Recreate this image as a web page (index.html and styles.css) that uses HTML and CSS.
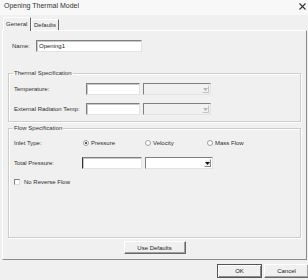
FILE: index.html
```html
<!DOCTYPE html>
<html lang="en">
<head>
  <meta charset="UTF-8">
  <title>Opening Thermal Model</title>
  <link rel="stylesheet" href="styles.css">
</head>
<body>
  <div class="dialog">
    <div class="titlebar">
      <span class="title">Opening Thermal Model</span>
      <svg class="close" width="7" height="7" viewBox="0 0 7 7"><path d="M0.5 0.5L6.5 6.5M6.5 0.5L0.5 6.5" stroke="#333" stroke-width="1.1"/></svg>
    </div>

    <div class="tabs">
      <span class="tab active">General</span>
      <span class="tab">Defaults</span>
    </div>

    <div class="page">
      <div class="row name-row">
        <label class="lbl w-name">Name:</label>
        <input class="field f-name" value="Opening1">
      </div>

      <fieldset class="group thermal">
        <legend>Thermal Specification</legend>
        <div class="row">
          <label class="lbl w-therm">Temperature:</label>
          <input class="field f-therm">
          <div class="combo disabled"><span class="arrow"><svg width="5" height="3" viewBox="0 0 5 3"><path d="M0 0H5L2.5 3Z" fill="#b5b5b5"/></svg></span></div>
        </div>
        <div class="row gap">
          <label class="lbl w-therm">External Radiaton Temp:</label>
          <input class="field f-therm">
          <div class="combo disabled"><span class="arrow"><svg width="5" height="3" viewBox="0 0 5 3"><path d="M0 0H5L2.5 3Z" fill="#b5b5b5"/></svg></span></div>
        </div>
      </fieldset>

      <fieldset class="group flow">
        <legend>Flow Specification</legend>
        <div class="row">
          <label class="lbl w-inlet">Inlet Type:</label>
          <span class="opt"><span class="radio checked"></span>Pressure</span>
          <span class="opt"><span class="radio"></span>Velocity</span>
          <span class="opt"><span class="radio"></span>Mass Flow</span>
        </div>
        <div class="row gap">
          <label class="lbl w-flow">Total Pressure:</label>
          <input class="field f-flow focus">
          <div class="combo"><span class="arrow"><svg width="5" height="3" viewBox="0 0 5 3"><path d="M0 0H5L2.5 3Z" fill="#111"/></svg></span></div>
        </div>
        <div class="row check-row">
          <span class="check"></span>No Reverse Flow
        </div>
      </fieldset>

      <div class="page-foot">
        <button class="btn use-def">Use Defaults</button>
      </div>
    </div>

    <div class="actions">
      <button class="btn ok">OK</button>
      <button class="btn">Cancel</button>
    </div>
  </div>
</body>
</html>
```

FILE: styles.css
```css
* { margin: 0; padding: 0; box-sizing: border-box; }
body { background: #f0f0f0; font-family: "Liberation Sans", Arial, sans-serif; font-size: 6px; color: #2e2e2e; overflow: hidden; }

.dialog { width: 308px; height: 280px; background: #f0f0f0; }

.titlebar {
  height: 15px; background: #f8f8f8; display: flex; justify-content: space-between;
  align-items: flex-start; padding: 2px 2px 0 4px;
}
.title { font-size: 7px; line-height: 8px; color: #333; }
.close { margin-top: 1px; }

.tabs { height: 15px; display: flex; align-items: flex-end; padding-left: 3px; }
.tab {
  width: 28px; height: 11px; line-height: 10px; padding-left: 2px;
  border: 1px solid; border-color: #fff #696969 transparent #fff; border-bottom: 0;
}
.tab.active {
  height: 14px; margin-bottom: -1px; line-height: 13px; background: #f0f0f0;
  position: relative; z-index: 1;
}

.page {
  height: 230px; margin: 0 1px 0 2px;
  border: 1px solid; border-color: #fff #8a8a8a #8a8a8a #fff;
}

.row { display: flex; align-items: center; height: 12px; }
.gap { margin-top: 8px; }
.name-row { margin-top: 9px; padding-left: 9px; }

.lbl { flex: none; }
.w-name { width: 24px; }
.w-therm { width: 72px; }
.w-flow { width: 68px; }
.w-inlet { width: 69px; }

.field {
  height: 12px; background: #fff; font: inherit; color: #222; padding: 0 2px;
  border: 1px solid; border-color: #7f7f7f #e3e3e3 #e3e3e3 #7f7f7f;
  box-shadow: inset 1px 1px 0 #c8c8c8; outline: none;
}
.f-name { width: 106px; }
.f-therm { width: 54px; }
.f-flow { width: 60px; }
.field.focus { border-left-color: #333; }

.combo {
  width: 68px; height: 12px; margin-left: 3px; background: #fff;
  border: 1px solid; border-color: #7f7f7f #e3e3e3 #e3e3e3 #7f7f7f;
  display: flex; justify-content: flex-end; align-items: center; padding-right: 1px;
}
.combo.disabled { background: #f0f0f0; }
.arrow {
  width: 7px; height: 8px; display: flex; align-items: center; justify-content: center;
  border: 1px solid; border-color: #fff #8a8a8a #8a8a8a #fff; background: #f0f0f0;
}
.combo.disabled .arrow { border-color: #f4f4f4 #c4c4c4 #c4c4c4 #f4f4f4; }

.group {
  margin: 0 5px; padding: 0 0 0 5px;
  border: 1px solid #cdcdcd; box-shadow: inset 1px 1px 0 #fff, 1px 1px 0 #fff;
}
.group legend { margin-left: -1px; padding: 0 1px; line-height: 8px; }
.thermal { margin-top: 17px; padding-top: 6px; padding-bottom: 6px; }
.flow { margin-top: 2px; height: 114px; padding-top: 5px; }

.opt { width: 62px; display: flex; align-items: center; }
.radio {
  width: 6px; height: 6px; border-radius: 50%; margin-right: 2px; background: #fff;
  border: 1px solid #a0a0a0; display: flex; align-items: center; justify-content: center;
}
.radio.checked::after { content: ""; width: 2px; height: 2px; border-radius: 50%; background: #222; }

.check-row { margin-top: 7px; }
.check {
  width: 6px; height: 6px; margin-right: 4px; background: #fff;
  border: 1px solid; border-color: #7f7f7f #dcdcdc #dcdcdc #7f7f7f;
}

.page-foot { display: flex; justify-content: center; margin-top: 3px; }

.btn {
  font: inherit; color: #222; background: #f0f0f0; height: 13px;
  border: 1px solid; border-color: #fff #696969 #696969 #fff;
  box-shadow: inset -1px -1px 0 #a0a0a0;
}
.use-def { width: 62px; }

.actions { display: flex; justify-content: flex-end; gap: 2px; margin-top: 4px; margin-right: -1px; }
.actions .btn { width: 45px; height: 14px; }
.btn.ok { border-color: #555; box-shadow: inset 1px 1px 0 #fff, inset -1px -1px 0 #8a8a8a; }
```
